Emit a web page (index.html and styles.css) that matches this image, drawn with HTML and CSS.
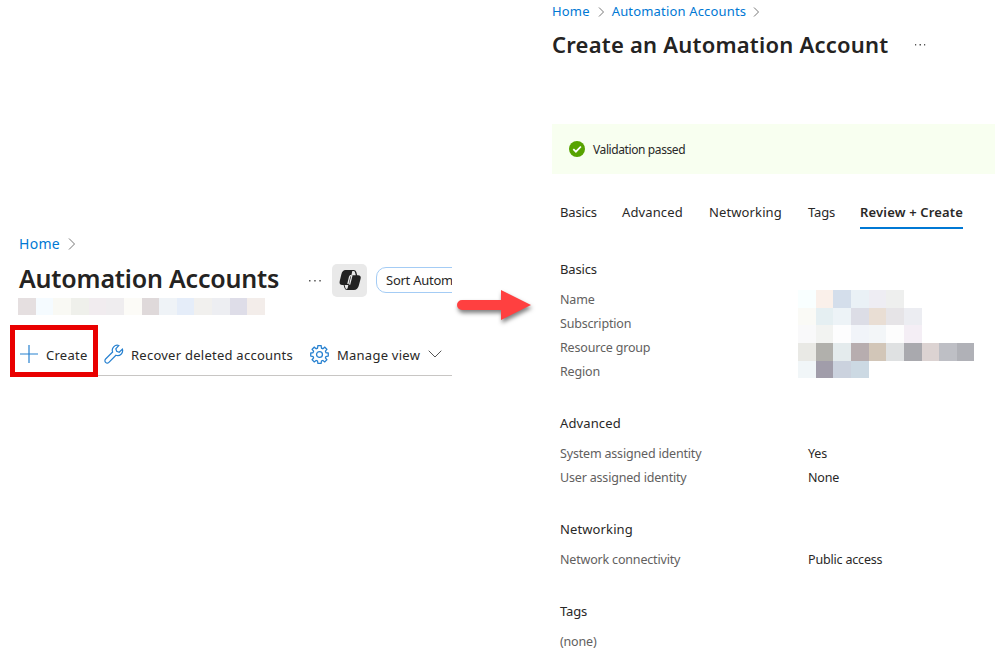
FILE: index.html
```html
<!DOCTYPE html>
<html lang="en">
<head>
<meta charset="utf-8">
<title>Create an Automation Account</title>
<link rel="stylesheet" href="styles.css">
</head>
<body>
<div class="board">
  <section class="list-page">
    <nav class="crumbs crumbs-large"><a>Home</a><svg class="chev" width="8" height="14" viewBox="0 0 8 14"><path d="M1 1.500 6.500 7 1 12.500"/></svg></nav>
    <header class="list-head">
      <h1>Automation Accounts</h1>
      <svg class="dots" width="14" height="4" viewBox="0 0 14 4"><path d="M1 1h1.500v1.500H1zM6.200 1h1.500v1.500H6.200zM11.300 1h1.500v1.500h-1.500z"/></svg>
      <span class="copilot"><svg width="24" height="22" viewBox="0 0 24 22"><path fill="#222" d="M7.500 1h8.200q2 0 2.600 2l.9 3.200H20q3.500 0 2.600 3.600l-1.700 6.500Q19.800 21 15.800 21H9.200q-2.200 0-2.800-2.200l-.8-2.900H4.300Q.9 15.900 1.700 12.300L3.300 5.600Q4.300 1 7.500 1z"/><path fill="#e9e9e9" d="M14.300 2h1.300q1 0 1.300 1l.9 3.200h-4.400zM10.300 15.900 9.700 19q-.3 1-1.300 1-.8 0-1-1l-.8-3.100z"/><path fill="none" stroke="#e9e9e9" stroke-width="1.300" d="M13.500 6.300q-1.500 0-1.900 1.500L9.900 15M14 6.200l-2.400 9.500"/></svg></span>
      <span class="pill">Sort Autom</span>
    </header>
    <div class="mosaic mosaic-line"><i class="a1"></i><i class="a2"></i><i class="a3"></i><i class="a4"></i><i class="a5"></i><i class="a6"></i><i class="a7"></i><i class="a8"></i><i class="a9"></i><i class="a10"></i><i class="a11"></i><i class="a12"></i><i class="a13"></i><i class="a14"></i></div>
    <div class="toolbar">
      <span class="tool create"><svg width="18" height="18" viewBox="0 0 18 18"><path d="M9 0v18M0 9h18"/></svg><span>Create</span></span>
      <span class="tool recover"><svg width="20" height="20" viewBox="0 0 20 20"><path d="M14.800 1.500a5 5 0 0 0-6.200 6.500l-7 7a2.300 2.300 0 0 0 3.300 3.300l7-7a5 5 0 0 0 6.500-6.200l-3.200 3.100-2.500-.9-.9-2.500z"/></svg><span>Recover deleted accounts</span></span>
      <span class="tool manage"><svg width="19" height="19" viewBox="0 0 18 18"><path d="M7.500.7h3l.4 2.300 1.300.5L14 2.100 16 4.100l-1.400 1.800.5 1.300 2.200.4v2.900l-2.200.4-.5 1.300L16 14l-2 2-1.800-1.400-1.300.5-.4 2.200h-3l-.4-2.200-1.300-.5L4 16l-2-2 1.400-1.800-.5-1.300-2.200-.4V7.600l2.200-.4.5-1.300L2 4.100l2-2 1.800 1.400L7.100 3z"/><circle cx="9" cy="9" r="2.800"/></svg><span>Manage view</span><svg class="down" width="14" height="8" viewBox="0 0 14 8"><path d="M.7.700 7 7 13.300.7"/></svg></span>
    </div>
  </section>

  <svg class="arrow" width="84" height="44" viewBox="0 0 84 44"><path d="M6 17h39V7l30 15-30 15V27H6a5 5 0 0 1 0-10z"/></svg>

  <main class="create-page">
    <nav class="crumbs"><a>Home</a><svg class="chev" width="7" height="12" viewBox="0 0 7 12"><path d="M1 1.500 5.500 6 1 10.500"/></svg><a>Automation Accounts</a><svg class="chev" width="7" height="12" viewBox="0 0 7 12"><path d="M1 1.500 5.500 6 1 10.500"/></svg></nav>
    <header class="create-head"><h1>Create an Automation Account</h1><svg class="dots" width="14" height="4" viewBox="0 0 14 4"><path d="M1 1h1.200v1.500H1zM5.500 1h1.500v1.500H5.500zM10 1h1.200v1.500H10z"/></svg></header>
    <div class="banner"><svg width="16" height="16" viewBox="0 0 16 16"><circle cx="8" cy="8" r="8" fill="#57a300"/><path d="m4.300 8.200 2.600 2.500 5-5.200" fill="none" stroke="#fff" stroke-width="1.800"/></svg><span>Validation passed</span></div>
    <nav class="tabs"><a class="tight">Basics</a><a>Advanced</a><a>Networking</a><a class="tight">Tags</a><a class="active">Review + Create</a></nav>
    <section class="group">
      <div class="labels"><h2 class="tight">Basics</h2><p>Name</p><p>Subscription</p><p>Resource group</p><p>Region</p></div>
      <div class="mosaic mosaic-block"><i class="b1"></i><i class="b2"></i><i class="b3"></i><i class="b4"></i><i class="b5"></i><i class="b6"></i><i class="first b7"></i><i class="b8"></i><i class="b9"></i><i class="b10"></i><i class="b11"></i><i class="b12"></i><i class="b13"></i><i class="first b14"></i><i class="b15"></i><i class="b16"></i><i class="b17"></i><i class="b18"></i><i class="b19"></i><i class="b20"></i><i class="first b21"></i><i class="b22"></i><i class="b23"></i><i class="b24"></i><i class="b25"></i><i class="b26"></i><i class="b27"></i><i class="b28"></i><i class="b29"></i><i class="b30"></i><i class="first b31"></i><i class="b32"></i><i class="b33"></i><i class="b34"></i></div>
    </section>
    <section class="group"><div class="labels"><h2>Advanced</h2><p>System assigned identity</p><p>User assigned identity</p></div><div class="values"><p>Yes</p><p>None</p></div></section>
    <section class="group"><div class="labels"><h2>Networking</h2><p>Network connectivity</p></div><div class="values"><p>Public access</p></div></section>
    <section class="group"><div class="labels"><h2 class="tight">Tags</h2><p>(none)</p></div></section>
  </main>
</div>
</body>
</html>
```
FILE: styles.css
```css
* { box-sizing: border-box; }
body { margin: 0; background: #fff; color: #292827; font: 13px/24px "Noto Sans", "Open Sans", sans-serif; }
h1, h2, p { margin: 0; font-weight: 400; }
h1 { color: #242322; font-weight: 600; line-height: 32px; white-space: nowrap; flex: none; }
a, span { white-space: nowrap; }
.board { display: flex; width: 995px; height: 664px; overflow: hidden; }
.list-page { width: 452px; padding-top: 232px; overflow: hidden; flex: none; }
.crumbs { display: flex; align-items: center; height: 24px; color: #0078d4; letter-spacing: .17px; }
.crumbs-large { padding-left: 19px; font-size: 14px; letter-spacing: .3px; }
.crumbs-large .chev { margin-left: 8px; }
.chev path { fill: none; stroke: #777; stroke-width: 1; }
.list-head { display: flex; align-items: center; height: 42px; margin-top: 3px; padding-left: 19px; }
.list-head h1 { width: 289px; padding-bottom: 5px; font-size: 25px; letter-spacing: -.19px; }
.dots { fill: #555; flex: none; }
.list-head .dots { margin-top: 1px; }
.copilot { display: flex; align-items: center; justify-content: center; width: 35px; height: 33px; margin-left: 10px; border-radius: 5px; background: #e9e9e9; flex: none; }
.pill { width: 120px; height: 26px; margin-left: 9px; padding-left: 9px; line-height: 25px; border: 1px solid #a4ccf5; border-radius: 10px; letter-spacing: -.25px; flex: none; }
.mosaic { display: grid; }
.mosaic-line { grid-template-columns: 18px 17px 18px 18px 17px 18px 18px 17px 18px 17px 18px 18px 17px 18px; width: 247px; height: 17px; margin: -3px 0 0 18px; }
.toolbar { display: flex; align-items: flex-start; height: 51px; margin: 10px 0 0 10px; letter-spacing: .25px; border-bottom: 1px solid #c8c6c4; }
.tool { display: flex; align-items: center; height: 60px; flex: none; }
.tool svg { flex: none; fill: none; stroke: #2781d0; stroke-width: 1.2; }
.create { width: 88px; height: 52px; padding-left: 5px; border: 5px solid #e90000; gap: 8px; }
.create svg { margin-top: 6px; }
.create span { margin-top: 8px; }
.recover { width: 206px; margin-left: 6px; gap: 7px; }
.manage { gap: 8px; }
.recover svg, .manage svg { margin-bottom: 2px; }
.manage .down { stroke: #555; stroke-width: 1; }
.arrow { flex: none; margin: 283px 0 0 4px; overflow: visible; filter: drop-shadow(1px 3px 2px rgba(0,0,0,.5)); }
.arrow path { fill: #ff4040; }
.create-page { width: 443px; margin-left: 12px; flex: none; }
.create-page .crumbs { height: 22px; }
.create-page .chev { margin: 2px 7px 0 8px; }
.create-page .chev:last-child { margin-left: 7px; }
.create-head { display: flex; align-items: center; height: 44px; padding-top: 1px; }
.create-head h1 { width: 362px; padding-bottom: 1px; font-size: 22px; letter-spacing: .22px; }
.banner { display: flex; align-items: center; gap: 8px; height: 50px; margin-top: 58px; padding-left: 17px; background: #f8fff0; font-size: 12px; letter-spacing: -.4px; }
.banner span { padding-top: 2px; }
.tabs { display: grid; grid-template-columns: 62px 87px 99px 52px 103px; height: 31px; margin: 24px 0 0 8px; line-height: 28px; letter-spacing: .12px; }
.tabs .active { border-bottom: 2px solid #0078d4; font-weight: 600; letter-spacing: .16px; }
.tabs .tight, .labels .tight { letter-spacing: -.15px; }
.group { display: grid; grid-template-columns: 248px 1fr; margin: 28px 0 0 8px; }
.group h2 { font-size: 13px; line-height: 24px; margin-bottom: 6px; letter-spacing: .12px; }
.group p { height: 24px; font-size: 12.5px; line-height: 26px; letter-spacing: -.18px; }
.labels p { color: #62605e; }
.values { padding-top: 30px; }
.mosaic-block { grid-template-columns: 18px 17px 18px 18px 17px 18px 18px 17px 18px 17px; grid-template-rows: 18px 17px 18px 18px 17px; width: 176px; height: 88px; margin: 33px 0 0 -10px; }
.first { grid-column-start: 1; }
.a1{background:#e5dfe0}.a2{background:#f5fbff}.a3{background:#f9f9f4}.a4{background:#eff0eb}.a5{background:#f1ecef}.a6{background:#efedef}.a7{background:#fcfbf7}.a8{background:#dfd9da}.a9{background:#eff3f7}.a10{background:#e5edf9}.a11{background:#f1f0ee}.a12{background:#edeef2}.a13{background:#dedde8}.a14{background:#f3edea}
.b1{background:#f9ffff}.b2{background:#faf0ea}.b3{background:#d4deeb}.b4{background:#eaf1f6}.b5{background:#eeedf3}.b6{background:#eeefee}
.b7{background:#fafaf6}.b8{background:#e5eff2}.b9{background:#edf3f7}.b10{background:#dcdde6}.b11{background:#e9ded4}.b12{background:#e6e4e7}.b13{background:#ecedf2}
.b14{background:#f9f9fa}.b15{background:#f2f3f1}.b16{background:#fdfdfe}.b17{background:#f1f4f9}.b18{background:#f3f6f8}.b19{background:#fdfdfd}.b20{background:#f4eef5}
.b21{background:#e9e9e5}.b22{background:#b1b0ac}.b23{background:#e4ebed}.b24{background:#b7adaf}.b25{background:#d2c6b8}.b26{background:#dfe1e2}.b27{background:#a9a9ae}.b28{background:#dcd3d2}.b29{background:#bebfc5}.b30{background:#b0b1b7}
.b31{background:#f1f6f8}.b32{background:#a19daa}.b33{background:#cbd2de}.b34{background:#ccd9e3}
```
